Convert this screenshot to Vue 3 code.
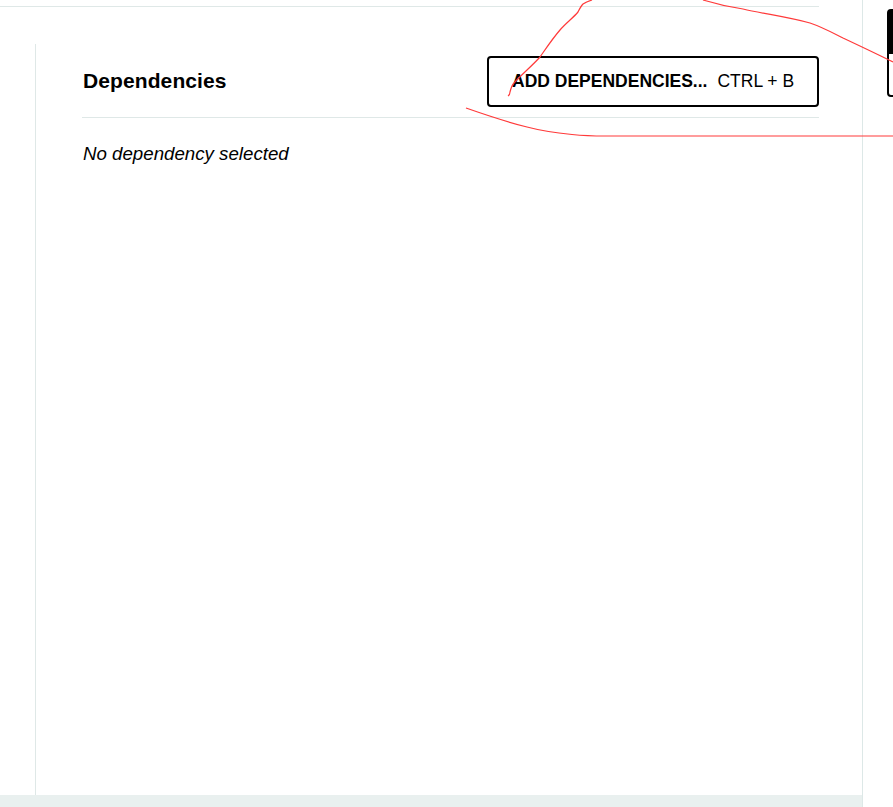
<template>
  <div class="page">
    <main class="main">
      <div class="content">
        <div class="top-rule"></div>
        <section class="deps">
          <div class="deps-head">
            <h2>Dependencies</h2>
            <button type="button" class="add-button">
              <strong>ADD DEPENDENCIES...</strong>
              <span>CTRL + B</span>
            </button>
          </div>
          <p class="empty">No dependency selected</p>
        </section>
      </div>
      <div class="footer-bar"></div>
    </main>
    <aside class="side">
      <div class="side-button"></div>
    </aside>

    <!-- hand drawn annotation on top of the page -->
    <svg class="scribble" width="893" height="807" viewBox="0 0 893 807" fill="none">
      <path d="M508 96 C509.500 95 510 93 510 92 C511 88 512 85 514 83 C522 74 532 66 540 57 C547 47 553 38 560 30 C566 23 573 18 578 12 C580 8 581 6 583 4 C586 2 589 1 592 0" />
      <path d="M703 0 C716 4 729 7 743 9 C765 14 788 17 810 23 C822 27 833 33 843 38 C860 46 877 54 893 62" />
      <path d="M466 108 C486 115 507 122 527 127 C542 131 557 133 572 134.500 C582 135.500 592 136 605 136 L893 136" />
    </svg>
  </div>
</template>

<script setup>
</script>

<style>
html,
body {
  margin: 0;
  background: #ffffff;
}
</style>

<style scoped>
.page {
  position: relative;
  display: flex;
  width: 893px;
  height: 807px;
  overflow: hidden;
  font-family: "Liberation Sans", Arial, sans-serif;
  color: #000000;
}

.main {
  display: flex;
  flex-direction: column;
  width: 862px;
  flex: none;
  border-right: 1px solid #dde8e7;
}

.content {
  flex: 1;
  min-height: 0;
  padding-top: 6px;
}

.top-rule {
  width: 819px;
  height: 1px;
  background: #dfe8e7;
}

.deps {
  box-sizing: border-box;
  height: 751px;
  margin: 37px 0 0 35px;
  padding: 13px 0 0 46px;
  border-left: 1px solid #dfe8e7;
}

.deps-head {
  display: flex;
  align-items: center;
  justify-content: space-between;
  width: 737px;
  height: 61px;
  border-bottom: 1px solid #dfe8e7;
  box-sizing: border-box;
}

h2 {
  margin: 0 0 13px 1px;
  font-size: 21px;
  font-weight: 700;
  letter-spacing: 0.1px;
}

.add-button {
  display: flex;
  align-items: center;
  gap: 10px;
  box-sizing: border-box;
  width: 332px;
  height: 51px;
  margin-bottom: 11px;
  padding: 0 0 0 23px;
  border: 2px solid #000000;
  border-radius: 4px;
  background: #ffffff;
  color: #000000;
  font-family: inherit;
  font-size: 17.5px;
}

.add-button strong {
  font-weight: 700;
}

.empty {
  margin: 24px 0 0 1px;
  font-size: 18.7px;
  font-style: italic;
  line-height: 24px;
}

.footer-bar {
  flex: none;
  height: 12px;
  background: #e9f0ef;
}

.side {
  flex: 1;
  padding: 9px 0 0 24px;
}

.side-button {
  box-sizing: border-box;
  width: 40px;
  height: 88px;
  border: 2px solid #000000;
  border-radius: 4px;
  background: linear-gradient(#000000 0 43px, #ffffff 43px);
}

.scribble {
  position: absolute;
  top: 0;
  left: 0;
  pointer-events: none;
}

.scribble path {
  stroke: #ff3a3a;
  stroke-width: 1.2;
}
</style>
